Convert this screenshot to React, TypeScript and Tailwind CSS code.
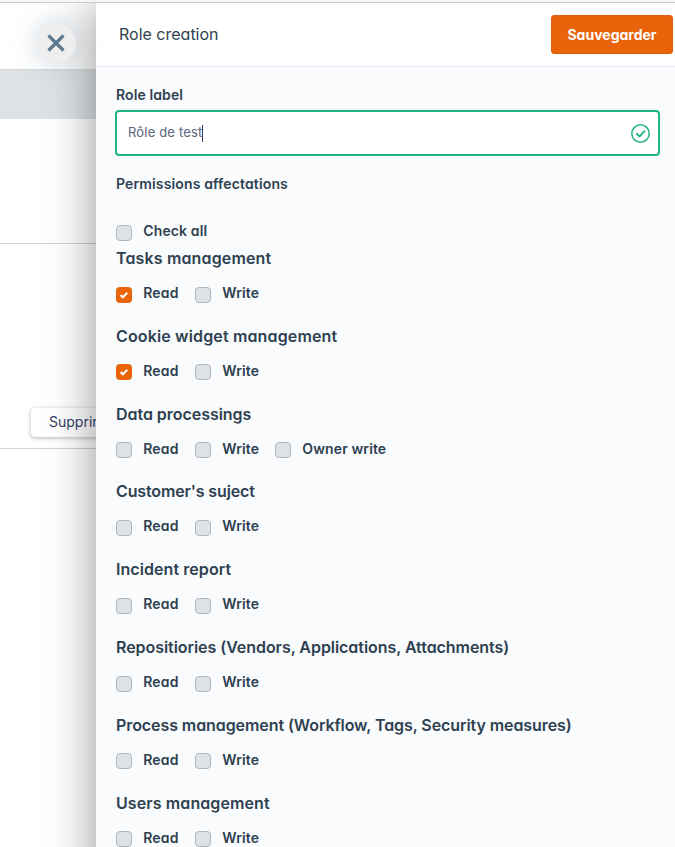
type Permission = { label: string; checked?: boolean };
type Group = { title: string; permissions: Permission[]; heading: string };

const readWrite: Permission[] = [{ label: "Read" }, { label: "Write" }];
const readChecked: Permission[] = [{ label: "Read", checked: true }, { label: "Write" }];

const groups: Group[] = [
  { title: "Tasks management", permissions: readChecked, heading: "tracking-[0.15px]" },
  { title: "Cookie widget management", permissions: readChecked, heading: "tracking-[0.15px]" },
  { title: "Data processings", permissions: [...readWrite, { label: "Owner write" }], heading: "tracking-[-0.04px]" },
  { title: "Customer's suject", permissions: readWrite, heading: "tracking-[-0.13px]" },
  { title: "Incident report", permissions: readWrite, heading: "tracking-[0.07px]" },
  { title: "Repositiories (Vendors, Applications, Attachments)", permissions: readWrite, heading: "tracking-[-0.05px]" },
  { title: "Process management (Workflow, Tags, Security measures)", permissions: readWrite, heading: "tracking-[-0.08px]" },
  { title: "Users management", permissions: readWrite, heading: "tracking-[0.1px]" },
];

function Checkbox({ checked }: { checked?: boolean }) {
  if (!checked) {
    return <span className="block size-4 shrink-0 rounded-[4px] border border-[#adb5bd] bg-[#dee2e6]" />;
  }
  return (
    <span className="flex size-4 shrink-0 items-center justify-center rounded-[4px] bg-[#e8630a]">
      <svg width="8" height="8" viewBox="0 0 8 8" fill="none" stroke="white" strokeWidth="2.1">
        <path d="M0.6 4.1 2.9 6.2 7.3 1.8" />
      </svg>
    </span>
  );
}

function Option({ label, checked, className }: Permission & { className: string }) {
  return (
    <label className={`flex shrink-0 items-start ${className}`}>
      <Checkbox checked={checked} />
      <span className="-mt-[2.7px] ml-[11.3px] text-[14px] leading-[18px] font-semibold tracking-[0.12px] whitespace-nowrap">{label}</span>
    </label>
  );
}

const widths = ["w-[79px]", "w-[80px]", "w-[120px]"];

export default function App() {
  return (
    <div className="flex h-[847px] w-[675px] flex-col overflow-hidden bg-white font-['Inter','Open_Sans',sans-serif] text-[#2e4150] [font-feature-settings:'cv11']">
      <div className="h-[3px] shrink-0 border-b border-[#cbcbcb] bg-[#f5f5f5]" />
      <div className="flex min-h-0 flex-1 overflow-hidden">
        <div className="relative w-24 shrink-0">
          <div className="h-[66px]" />
          <div className="h-[50px] border-t border-[#d5d9dd] bg-[#dee2e6]" />
          <div className="h-[125px] border-b border-[#ced3da]" />
          <div className="flex h-[205px] items-end border-b border-[#ced3e0] pb-[11px] pl-[31px]">
            <div className="h-[29px] w-[100px] shrink-0 rounded-[4px] bg-white pl-[18px] text-[14px] leading-[28px] whitespace-nowrap text-[#343d65] shadow-[0_1px_4px_rgba(0,0,0,0.3)]">
              Supprimer
            </div>
          </div>
          <button className="absolute top-5 left-9 z-20 flex size-10 items-center justify-center rounded-full bg-[#eeeeef] shadow-[0_0_28px_rgba(91,122,149,0.3)]">
            <svg width="18" height="18" viewBox="0 0 18 18" stroke="#5f7a90" strokeWidth="3.2">
              <path d="M1.5 1.5 16.5 16.5M16.5 1.5 1.5 16.5" />
            </svg>
          </button>
        </div>

        <div className="z-10 -mb-20 flex min-w-0 flex-1 flex-col bg-[#fafbfd] shadow-[0_0_45px_rgba(0,0,0,0.42)]">
          <header className="flex h-16 shrink-0 items-center justify-between border-b border-[#e3e9f2] bg-white pr-[2px] pl-[23px]">
            <h1 className="-mt-px text-[16px] leading-6">Role creation</h1>
            <button className="h-[39px] w-[122px] rounded-[3px] border border-[#d95f12] bg-[#e8630a] pb-px text-[14px] font-bold text-white">
              Sauvegarder
            </button>
          </header>

          <main className="flex flex-1 flex-col overflow-hidden pr-[15px] pl-5">
            <div className="mt-[18px] h-5 shrink-0 text-[14px] leading-5 font-semibold tracking-[0.1px]">Role label</div>
            <div className="mt-[5px] -ml-px flex h-[46px] shrink-0 items-center rounded-[4px] border-2 border-[#20b486] bg-white pr-[8px] pl-[11px] text-[13px] text-[#59657b]">
              <span className="tracking-[0.17px]">Rôle de test</span>
              <span className="h-[17px] w-px bg-[#2e3a60]" />
              <svg className="ml-auto" width="19" height="19" viewBox="0 0 19 19" fill="none" stroke="#20b486">
                <circle cx="9.5" cy="9.5" r="8.7" strokeWidth="1.5" />
                <path d="M5.3 9.3 8.6 12.4 14 6.7" strokeWidth="1.9" />
              </svg>
            </div>
            <div className="mt-[18px] h-5 shrink-0 text-[14px] leading-5 font-semibold tracking-[0.14px]">Permissions affectations</div>
            <div className="mt-[31px] h-[21.9px] shrink-0">
              <Option label="Check all" className="" />
            </div>
            {groups.map((group) => (
              <section key={group.title} className="h-[77.82px] shrink-0">
                <h2 className={`h-[39.7px] text-[16px] leading-[22px] font-semibold whitespace-nowrap ${group.heading}`}>{group.title}</h2>
                <div className="flex">
                  {group.permissions.map((permission, i) => (
                    <Option key={permission.label} {...permission} className={widths[i]} />
                  ))}
                </div>
              </section>
            ))}
          </main>
        </div>
      </div>
    </div>
  );
}
